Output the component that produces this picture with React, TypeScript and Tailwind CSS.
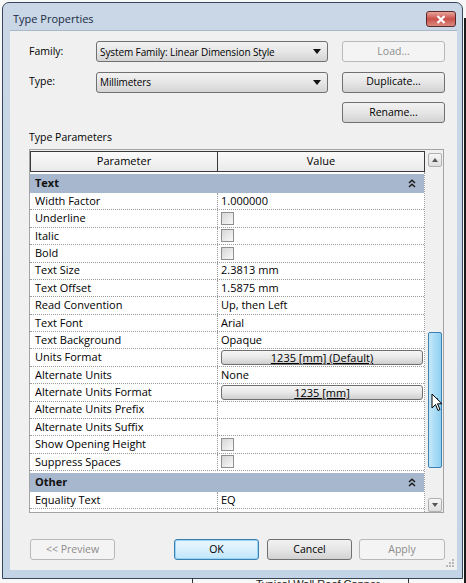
import React from "react";

type Row = { p: string; v?: string; cb?: boolean; btn?: string };

const rows: Row[] = [
  { p: "Width Factor", v: "1.000000" },
  { p: "Underline", cb: true },
  { p: "Italic", cb: true },
  { p: "Bold", cb: true },
  { p: "Text Size", v: "2.3813 mm" },
  { p: "Text Offset", v: "1.5875 mm" },
  { p: "Read Convention", v: "Up, then Left" },
  { p: "Text Font", v: "Arial" },
  { p: "Text Background", v: "Opaque" },
  { p: "Units Format", btn: "1235 [mm] (Default)" },
  { p: "Alternate Units", v: "None" },
  { p: "Alternate Units Format", btn: "1235 [mm]" },
  { p: "Alternate Units Prefix" },
  { p: "Alternate Units Suffix" },
  { p: "Show Opening Height", cb: true },
  { p: "Suppress Spaces", cb: true },
];

function Checkbox() {
  return (
    <div className="w-[13px] h-[13px] border border-[#8e8f8f] bg-gradient-to-br from-[#d6d6d6] to-[#f9f9f9]" />
  );
}

function Chevrons() {
  return (
    <svg width="8" height="9" viewBox="0 0 8 9" className="mr-[8px]">
      <path d="M1 4 L4 1.3 L7 4" fill="none" stroke="#1a1a1a" strokeWidth="1.5" />
      <path d="M1 8 L4 5.3 L7 8" fill="none" stroke="#1a1a1a" strokeWidth="1.5" />
    </svg>
  );
}

function Arrow() {
  return (
    <svg width="8" height="5" viewBox="0 0 8 5">
      <path d="M0 0 L8 0 L4 5 Z" fill="#111" />
    </svg>
  );
}

function Combo({ text }: { text: string }) {
  return (
    <div className="w-[232px] h-[21px] rounded-[3px] border border-[#707070] bg-gradient-to-b from-[#f2f2f2] via-[#e6e6e6] to-[#d4d4d4] flex items-center justify-between pl-[3px] pr-[6px] text-[10px] tracking-[-0.1px] text-black">
      <span className="leading-none">{text}</span>
      <Arrow />
    </div>
  );
}

function Btn({
  text,
  disabled,
  def,
  w = "w-[103px]",
}: {
  text: string;
  disabled?: boolean;
  def?: boolean;
  w?: string;
}) {
  if (disabled) {
    return (
      <div className={`${w} h-[21px] rounded-[3px] border border-[#b5b9bc] bg-[#f4f4f4] flex items-center justify-center text-[10.5px] text-[#8d8d8d]`}>
        {text}
      </div>
    );
  }
  if (def) {
    return (
      <div className={`${w} h-[21px] rounded-[3px] border border-[#3c7fb1] bg-gradient-to-b from-[#eaf6fd] via-[#d9f0fc] to-[#bee6fd] shadow-[inset_0_0_0_1px_#98d5f5] flex items-center justify-center text-[10.5px] text-black`}>
        {text}
      </div>
    );
  }
  return (
    <div className={`${w} h-[21px] rounded-[3px] border border-[#707070] bg-gradient-to-b from-[#f2f2f2] via-[#e6e6e6] to-[#d2d2d2] flex items-center justify-center text-[10.5px] text-black`}>
      {text}
    </div>
  );
}

function GroupBand({ label }: { label: string }) {
  return (
    <div className="h-[21px] shrink-0 bg-[#a7b7cd] flex items-center justify-between pl-[5px] border-t-2 border-white">
      <span className="font-bold text-[11px] text-[#111]">{label}</span>
      <Chevrons />
    </div>
  );
}

function DataRow({ r }: { r: Row }) {
  return (
    <div className="h-[17.375px] shrink-0 flex bg-white border-b border-dotted border-[#9a9a9a]">
      <div className="w-[188px] shrink-0 border-r border-dotted border-[#9a9a9a] pl-[5px] flex items-center text-[11px] text-black whitespace-nowrap">
        {r.p}
      </div>
      <div className="flex-1 flex items-center pl-[3px] pr-[1px] text-[11px] text-black">
        {r.v && <span>{r.v}</span>}
        {r.cb && <Checkbox />}
        {r.btn && (
          <div className="w-full h-[15px] rounded-[3px] border border-[#6f6f6f] bg-gradient-to-b from-[#f6f6f6] via-[#e8e8e8] to-[#cfcfcf] flex items-center justify-center text-[11px]">
            <span className="underline underline-offset-[1px] leading-none">{r.btn}</span>
          </div>
        )}
      </div>
    </div>
  );
}

export default function App() {
  return (
    <div className="w-[466px] h-[583px] bg-[#f7f7f7] relative overflow-hidden font-['Open_Sans',sans-serif]">
      <div className="pt-[2px] pl-[2px] flex">
        {/* window */}
        <div className="w-[461px] h-[577px] rounded-t-[7px] border border-[#37475a] bg-gradient-to-b from-[#c9d7e6] to-[#c3d4e6] flex flex-col">
          {/* title bar */}
          <div className="h-[27px] flex items-center justify-between pl-[10px] pr-[6px] shrink-0">
            <span className="text-[11px] text-[#1a2c44] leading-none mt-[4px]">Type Properties</span>
            <div className="w-[30px] h-[16px] mt-[5px] rounded-[3px] border border-[#5a2a2a] bg-gradient-to-b from-[#e8a49c] via-[#c8504a] to-[#d98a80] flex items-center justify-center">
              <svg width="10" height="9" viewBox="0 0 10 9">
                <path d="M1.5 1 L8.5 8 M8.5 1 L1.5 8" stroke="white" strokeWidth="2.2" />
              </svg>
            </div>
          </div>
          {/* client */}
          <div className="ml-[7px] mr-[5px] h-[540px] bg-[#f0f0f0] border-t border-[#a9b8c8] flex flex-col relative">
            {/* top grid */}
            <div className="pt-[10px] pl-[19px] flex flex-col gap-[9.5px]">
              <div className="flex items-center">
                <span className="w-[67px] text-[10.5px] text-black">Family:</span>
                <Combo text="System Family: Linear Dimension Style" />
                <div className="ml-[14px]">
                  <Btn text="Load..." disabled />
                </div>
              </div>
              <div className="flex items-center">
                <span className="w-[67px] text-[10.5px] text-black">Type:</span>
                <Combo text="Millimeters" />
                <div className="ml-[14px]">
                  <Btn text="Duplicate..." />
                </div>
              </div>
              <div className="flex items-center">
                <span className="w-[67px]" />
                <span className="w-[232px]" />
                <div className="ml-[14px]">
                  <Btn text="Rename..." />
                </div>
              </div>
            </div>
            <div className="pl-[19px] mt-[7px] h-[16px] flex items-center text-[10.5px] text-black">
              Type Parameters
            </div>
            {/* table frame */}
            <div className="ml-[19px] mt-[3px] w-[415px] h-[364px] border border-[#a3a3a3] bg-[#f0f0f0] flex">
              <div className="w-[395px] pt-[1px] flex flex-col overflow-hidden">
                <div className="h-[21px] shrink-0 flex border border-[#3a3a3a] bg-gradient-to-b from-[#fbfbfb] to-[#eaeaea] text-[11px] text-black">
                  <div className="w-[187px] border-r border-[#3a3a3a] flex items-center justify-center">Parameter</div>
                  <div className="flex-1 flex items-center justify-center">Value</div>
                </div>
                <div className="flex-1 overflow-hidden flex flex-col border-r border-dotted border-[#9a9a9a] bg-white">
                  <GroupBand label="Text" />
                  {rows.map((r) => (
                    <DataRow key={r.p} r={r} />
                  ))}
                  <GroupBand label="Other" />
                  <DataRow r={{ p: "Equality Text", v: "EQ" }} />
                  <DataRow r={{ p: "" }} />
                </div>
              </div>
              {/* scrollbar */}
              <div className="ml-[3px] w-[15px] pt-[3px] flex flex-col">
                <div className="h-[14px] w-[14px] rounded-[2px] border border-[#b0b0b0] bg-gradient-to-b from-[#f6f6f6] to-[#dedede] flex items-center justify-center">
                  <svg width="6" height="4" viewBox="0 0 6 4">
                    <path d="M0 4 L3 0 L6 4 Z" fill="#555" />
                  </svg>
                </div>
                <div className="flex-1 w-[14px] bg-[#f0f0f0] flex flex-col">
                  <div className="mt-[165px] h-[136px] rounded-[2px] border border-[#3c7fb1] bg-gradient-to-r from-[#c4e8fa] via-[#a9dcf6] to-[#8fd0f2] flex flex-col items-center justify-center gap-[1px]">
                    <div className="w-[6px] h-[1px] bg-[#2a5a80]" />
                    <div className="w-[6px] h-[1px] bg-[#2a5a80]" />
                    <div className="w-[6px] h-[1px] bg-[#2a5a80]" />
                  </div>
                </div>
                <div className="h-[14px] w-[14px] rounded-[2px] border border-[#b0b0b0] bg-gradient-to-b from-[#f6f6f6] to-[#dedede] flex items-center justify-center">
                  <svg width="6" height="4" viewBox="0 0 6 4">
                    <path d="M0 0 L6 0 L3 4 Z" fill="#555" />
                  </svg>
                </div>
              </div>
            </div>
            {/* bottom buttons */}
            <div className="mt-[26px] pl-[20px] flex items-center">
              <Btn text="<< Preview" disabled w="w-[85px]" />
              <div className="ml-[59px]">
                <Btn text="OK" def w="w-[85px]" />
              </div>
              <div className="ml-[8px]">
                <Btn text="Cancel" w="w-[85px]" />
              </div>
              <div className="ml-[7px]">
                <Btn text="Apply" disabled w="w-[86px]" />
              </div>
            </div>
            {/* resize grip */}
            <div className="absolute right-[3px] bottom-[3px] grid grid-cols-3 gap-[1px]">
              <span className="w-[2px] h-[2px]" />
              <span className="w-[2px] h-[2px]" />
              <span className="w-[2px] h-[2px] bg-[#b8b8b8]" />
              <span className="w-[2px] h-[2px]" />
              <span className="w-[2px] h-[2px] bg-[#b8b8b8]" />
              <span className="w-[2px] h-[2px] bg-[#b8b8b8]" />
              <span className="w-[2px] h-[2px] bg-[#b8b8b8]" />
              <span className="w-[2px] h-[2px] bg-[#b8b8b8]" />
              <span className="w-[2px] h-[2px] bg-[#b8b8b8]" />
            </div>
          </div>
        </div>
        <div className="ml-[1px] w-[2px] h-[583px] bg-[#1a1a1a] mt-[16px]" />
      </div>
      {/* background drawing below window */}
      <div className="absolute left-0 top-[578px] w-[466px] h-[5px] overflow-hidden">
        <div className="absolute left-[192px] top-0 w-[1px] h-[5px] bg-[#333]" />
        <div className="absolute left-[408px] top-0 w-[1px] h-[5px] bg-[#333]" />
        <div className="absolute left-[256px] top-[1px] text-[11px] leading-none text-[#222] font-['Liberation_Sans',sans-serif]">
          Typical Wall Roof Capper
        </div>
      </div>
      {/* mouse cursor */}
      <svg className="absolute left-[431px] top-[393px]" width="12" height="19" viewBox="0 0 12 19">
        <path d="M1 1 L1 15 L4.5 11.5 L7 17.5 L9 16.5 L6.5 10.8 L11 10.8 Z" fill="white" stroke="black" strokeWidth="1" />
      </svg>
    </div>
  );
}
